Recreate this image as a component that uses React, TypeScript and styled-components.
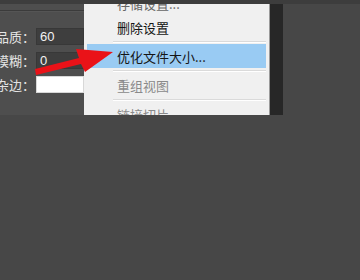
import React from 'react';
import styled, { createGlobalStyle } from 'styled-components';

const GlobalStyle = createGlobalStyle`
  html, body {
    margin: 0;
    padding: 0;
    background: #474747;
  }
  body {
    width: 360px;
    height: 280px;
    overflow: hidden;
    font-family: "Noto Sans CJK SC", "Noto Sans", sans-serif;
  }
`;

const Page = styled.div`
  position: relative;
  width: 360px;
  height: 280px;
  display: flex;
  flex-direction: column;
  background: #474747;
`;

const TopBand = styled.div`
  height: 4px;
  background: #3d3d3d;
`;

const Shot = styled.div`
  display: flex;
  height: 111px;
`;

const Panel = styled.div`
  width: 84px;
  background: #4e4e4e;
  overflow: hidden;
  display: flex;
  flex-direction: column;
`;

const PanelRule = styled.div`
  margin-top: 6px;
  height: 1px;
  background: #3b3b3b;
  border-bottom: 1px solid #555;
`;

const Fields = styled.div`
  display: flex;
  flex-direction: column;
  gap: 7px;
  margin-top: 16px;
`;

const Field = styled.div`
  display: flex;
  align-items: center;
  height: 17px;
`;

const Label = styled.span`
  flex: 0 0 35px;
  display: flex;
  justify-content: flex-end;
  color: #e4e4e4;
  font-size: 13px;
  line-height: 17px;
  white-space: nowrap;
  overflow: hidden;
  span {
    flex-shrink: 0;
  }
`;

const Input = styled.div<{ $white?: boolean }>`
  flex: 1;
  height: 17px;
  margin-left: 1px;
  box-sizing: border-box;
  padding-left: 3px;
  background: ${(p) => (p.$white ? '#ffffff' : '#3e3e3e')};
  border: 1px solid ${(p) => (p.$white ? '#d8d8d8' : '#383838')};
  color: #f2f2f2;
  font-family: "Liberation Sans", Arial, sans-serif;
  font-size: 13px;
  line-height: 15px;
`;

const Menu = styled.div`
  width: 185px;
  background: #f0f0f0;
  border-right: 1px solid #9a9a9a;
  overflow: hidden;
  display: flex;
  flex-direction: column;
`;

const Item = styled.div<{ $active?: boolean; $muted?: boolean }>`
  flex: 0 0 24px;
  margin: 0 3px;
  padding-left: 30px;
  display: flex;
  align-items: center;
  background: ${(p) => (p.$active ? '#99cbf3' : 'transparent')};
  color: ${(p) => (p.$muted ? '#8a8a8a' : '#151515')};
  font-size: 13px;
  white-space: nowrap;
  &:first-child {
    margin-top: -13px;
    color: #666;
  }
`;

const Separator = styled.div`
  flex: 0 0 5px;
  margin: 0 3px 0 29px;
  display: flex;
  flex-direction: column;
  justify-content: center;
  &::before {
    content: '';
    height: 1px;
    background: #dadada;
    border-bottom: 1px solid #ffffff;
  }
`;

const Shadow = styled.div`
  width: 13px;
  background: #272727;
`;

const Arrow = styled.svg`
  position: absolute;
  left: 0;
  top: 0;
  pointer-events: none;
`;

export default function App() {
  return (
    <Page>
      <GlobalStyle />
      <TopBand />
      <Shot>
        <Panel>
          <PanelRule />
          <Fields>
            <Field>
              <Label><span>品质：</span></Label>
              <Input>60</Input>
            </Field>
            <Field>
              <Label><span>模糊：</span></Label>
              <Input>0</Input>
            </Field>
            <Field>
              <Label><span>杂边：</span></Label>
              <Input $white />
            </Field>
          </Fields>
        </Panel>
        <Menu>
          <Item>存储设置...</Item>
          <Item>删除设置</Item>
          <Separator />
          <Item $active>优化文件大小...</Item>
          <Separator />
          <Item $muted>重组视图</Item>
          <Separator />
          <Item $muted>链接切片</Item>
        </Menu>
        <Shadow />
      </Shot>
      <Arrow width="360" height="120" viewBox="0 0 360 120">
        <polygon
          points="35,69 79,58 76,49 113,52 85,72 81,64 36,75"
          fill="#ea1218"
        />
      </Arrow>
    </Page>
  );
}
